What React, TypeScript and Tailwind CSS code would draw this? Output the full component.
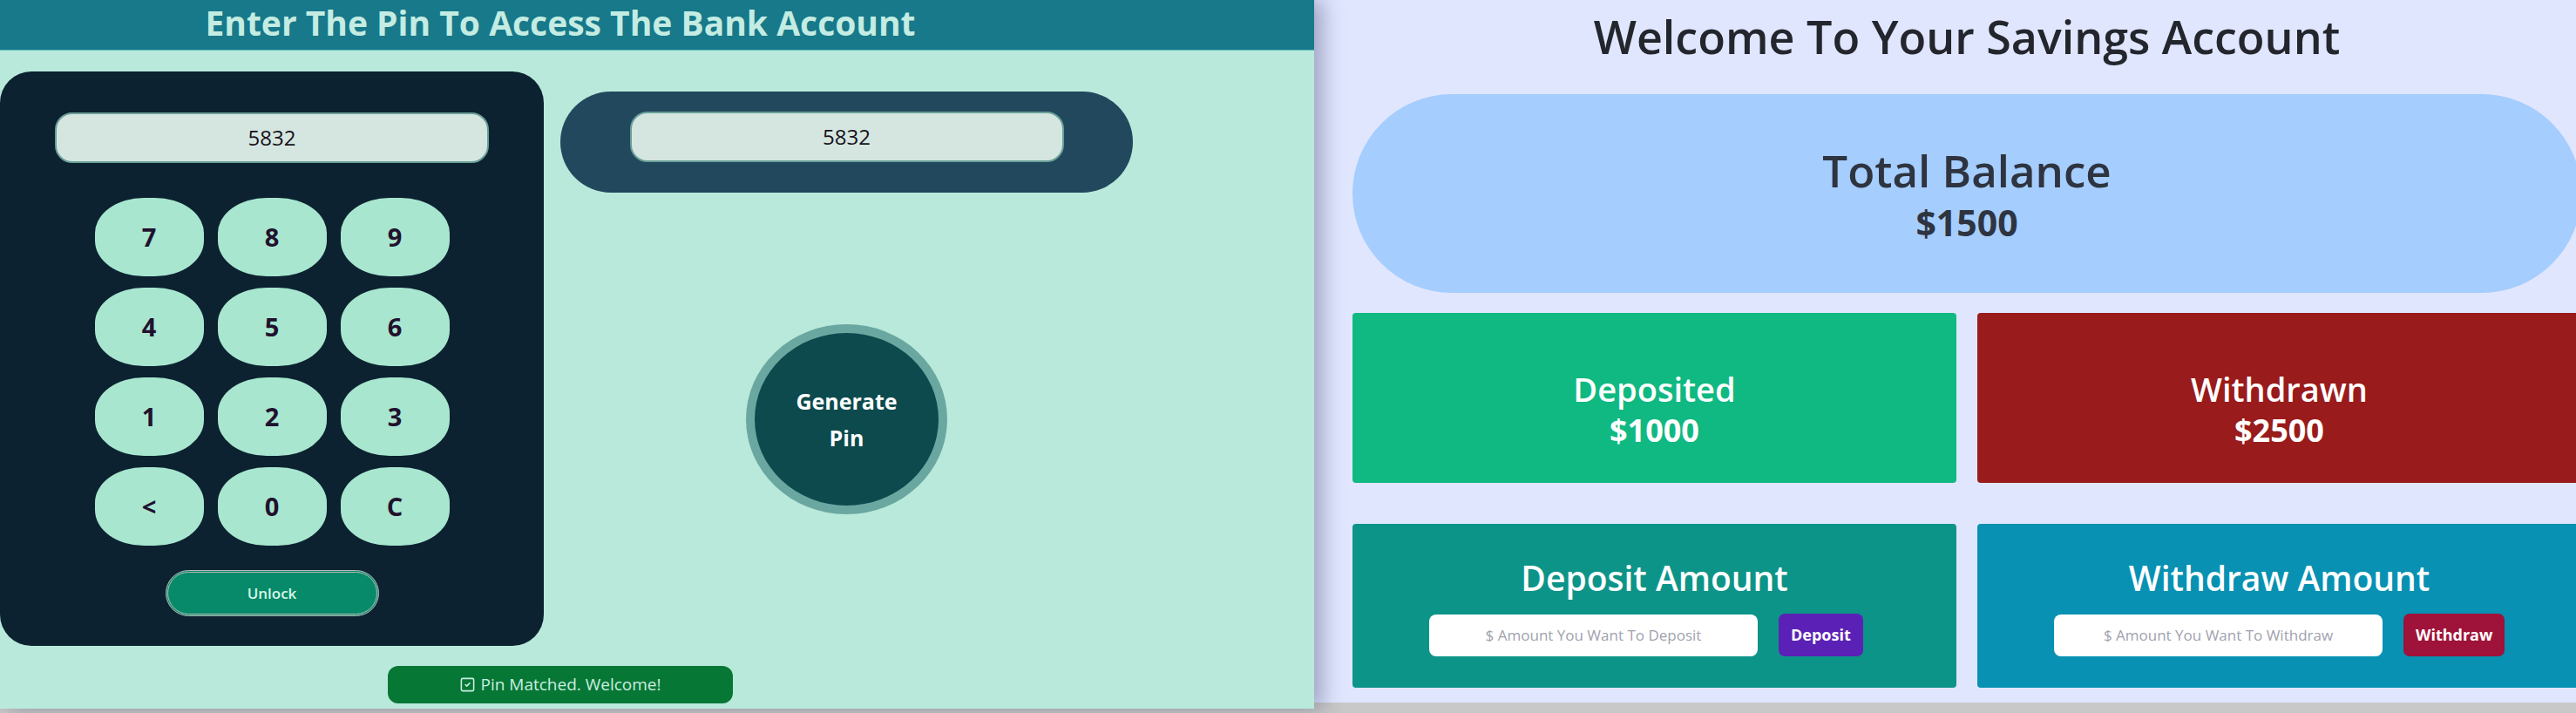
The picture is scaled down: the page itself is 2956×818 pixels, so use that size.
import { SquareCheck } from "lucide-react";

const KEYS = ["7", "8", "9", "4", "5", "6", "1", "2", "3", "<", "0", "C"];

function PinInput({ value }: { value: string }) {
  return (
    <div className="w-[498px] h-[58px] rounded-[20px] border-2 border-[#6a9f98] bg-[#d5e6e0] flex items-center justify-center text-[24px] text-[#16121c]">
      {value}
    </div>
  );
}

function Keypad() {
  return (
    <div className="w-[624px] h-[659px] shrink-0 rounded-[36px] bg-[#0c2230] flex flex-col items-center pt-[47px]">
      <PinInput value="5832" />
      <div className="grid grid-cols-[repeat(3,125px)] gap-x-[16px] gap-y-[13px] mt-[40px]">
        {KEYS.map((k) => (
          <button
            key={k}
            className="h-[90px] rounded-[45%] bg-[#a8e6d0] text-[29px] font-bold text-[#21112d] flex items-center justify-center"
          >
            {k}
          </button>
        ))}
      </div>
      <button className="mt-[28px] w-[245px] h-[53px] rounded-full border-[3px] border-double border-[#b9b9b9] bg-[#078a69] text-[17px] font-semibold text-[#d8f6ea]">
        Unlock
      </button>
    </div>
  );
}

function StatCard({ title, amount, color }: { title: string; amount: string; color: string }) {
  return (
    <div className={`h-[195px] rounded-[4px] ${color} flex flex-col items-center justify-center pt-[24px] text-white`}>
      <div className="text-[38px] font-semibold leading-[50px]">{title}</div>
      <div className="text-[36px] font-bold leading-[46px]">{amount}</div>
    </div>
  );
}

function ActionCard({
  title,
  placeholder,
  label,
  color,
  btn,
}: {
  title: string;
  placeholder: string;
  label: string;
  color: string;
  btn: string;
}) {
  return (
    <div className={`h-[188px] rounded-[4px] ${color} flex flex-col pt-[36px]`}>
      <div className="text-center text-[39px] font-semibold leading-[52px] text-white">{title}</div>
      <div className="flex items-center gap-[24px] pl-[88px] mt-[15px]">
        <input
          placeholder={placeholder}
          className="w-[377px] h-[48px] rounded-[8px] bg-white text-center text-[17px] text-[#333] placeholder:text-[#9fa2ae] outline-none"
        />
        <button className={`h-[49px] px-[14px] rounded-[7px] ${btn} text-[18px] font-bold text-white`}>
          {label}
        </button>
      </div>
    </div>
  );
}

export default function App() {
  return (
    <div
      className="flex w-[2956px] h-[818px] overflow-hidden bg-[#c8c8c8]"
      style={{ fontFamily: '"Open Sans", "Noto Sans", sans-serif' }}
    >
      {/* pin side */}
      <div className="relative z-10 w-[1508px] h-[813px] shrink-0 bg-[#b9e9db] shadow-[10px_0_22px_rgba(40,44,90,0.35)]">
        <div className="h-[58px] bg-[#17798a] border-b border-[#5fb8b9]">
          <h1 className="w-[1286px] text-center text-[39px] font-bold leading-[52px] text-[#c4ece2]">
            Enter The Pin To Access The Bank Account
          </h1>
        </div>
        <div className="flex gap-[19px] pt-[24px]">
          <Keypad />
          <div className="w-[657px] flex flex-col items-center pt-[23px]">
            <div className="w-[657px] h-[116px] rounded-full bg-[#22485d] flex justify-center pt-[23px]">
              <PinInput value="5832" />
            </div>
            <button className="mt-[151px] w-[231px] h-[218px] rounded-[50%] border-[10px] border-[#6aa7a0] bg-[#0d4a4e] text-[25px] font-bold leading-[42px] text-white">
              Generate
              <br />
              Pin
            </button>
          </div>
        </div>
        <div className="w-[1286px] flex justify-center mt-[23px]">
          <div className="w-[396px] h-[43px] rounded-[12px] bg-[#077735] flex items-center justify-center gap-[5px] text-[19px] text-[#c9eee0]">
            <SquareCheck size={19} strokeWidth={2} />
            Pin Matched. Welcome!
          </div>
        </div>
      </div>

      {/* account side */}
      <div className="w-[1498px] h-[806px] shrink-0 bg-[#e0e6fe] px-[44px] pt-[6px]">
        <h2 className="text-center text-[52px] font-semibold leading-[72px] text-[#23262d]">
          Welcome To Your Savings Account
        </h2>
        <div className="mt-[30px] h-[228px] rounded-full bg-[#a5cdfd] flex flex-col items-center justify-center text-[#2e3440]">
          <div className="text-[51px] font-semibold leading-[66px]">Total Balance</div>
          <div className="text-[41px] font-bold leading-[54px]">$1500</div>
        </div>
        <div className="grid grid-cols-2 gap-[24px] mt-[23px]">
          <StatCard title="Deposited" amount="$1000" color="bg-[#10b981]" />
          <StatCard title="Withdrawn" amount="$2500" color="bg-[#991b1b]" />
        </div>
        <div className="grid grid-cols-2 gap-[24px] mt-[47px]">
          <ActionCard
            title="Deposit Amount"
            placeholder="$ Amount You Want To Deposit"
            label="Deposit"
            color="bg-[#0d9488]"
            btn="bg-[#5b21b6]"
          />
          <ActionCard
            title="Withdraw Amount"
            placeholder="$ Amount You Want To Withdraw"
            label="Withdraw"
            color="bg-[#0891b2]"
            btn="bg-[#9f1239]"
          />
        </div>
      </div>
    </div>
  );
}
